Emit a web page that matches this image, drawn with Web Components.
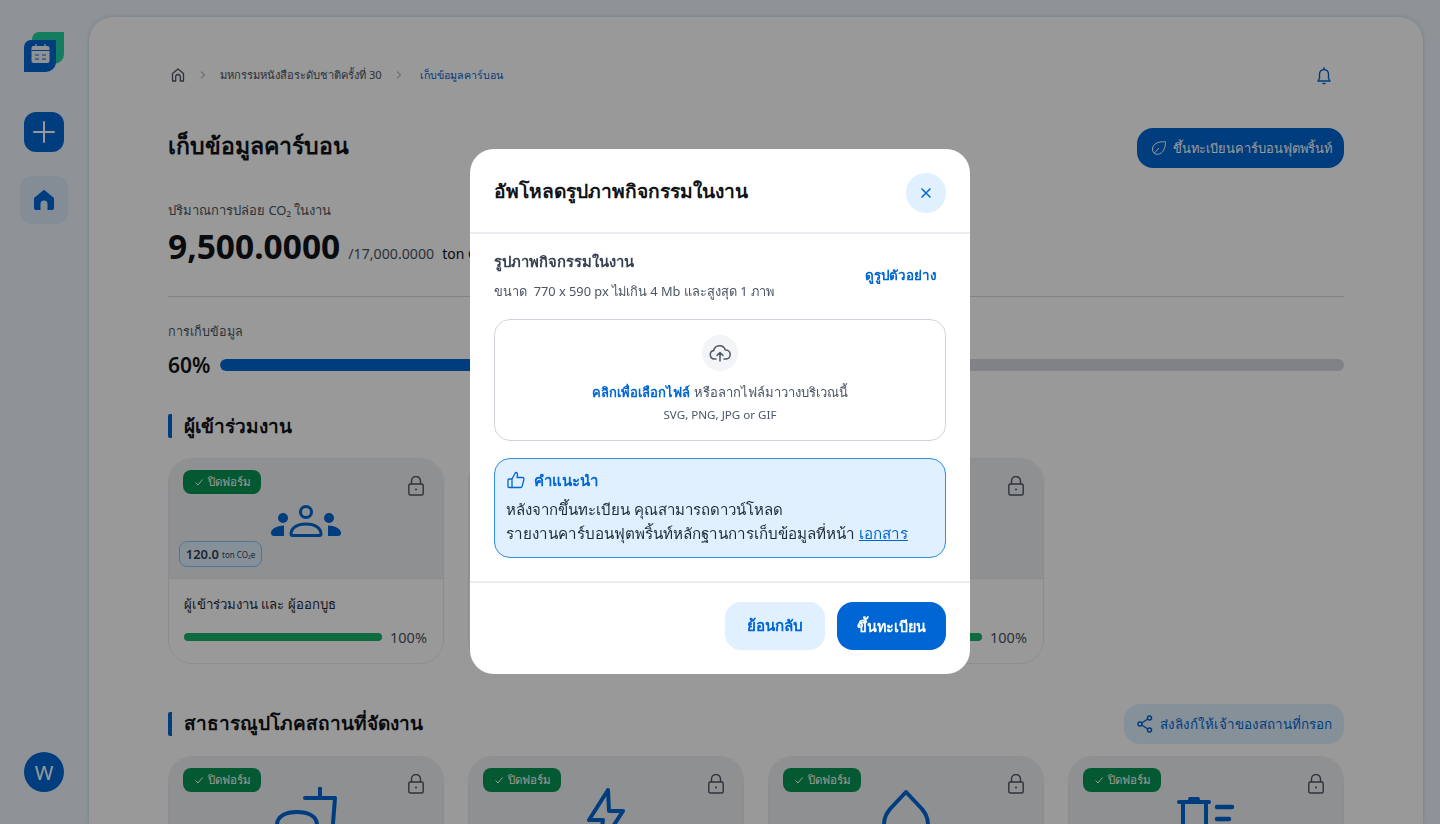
<!DOCTYPE html>
<html lang="th">
<head>
<meta charset="utf-8">
<title>เก็บข้อมูลคาร์บอน</title>
<style>
    html, body { margin: 0; height: 100%; overflow: hidden; }
    body {
        font-family: "Noto Sans", sans-serif;
        background: #eef6fc;
        color: #101318;
    }
</style>
</head>
<body>
<app-shell>
    <app-sidebar slot="side"></app-sidebar>
    <page-main>
        <page-crumbs></page-crumbs>
        <page-heading></page-heading>
        <carbon-stats></carbon-stats>

        <section-title>ผู้เข้าร่วมงาน</section-title>
        <card-grid>
            <carbon-card icon="people" title-text="ผู้เข้าร่วมงาน และ ผู้ออกบูธ" chip="120.0" badge progress></carbon-card>
            <carbon-card progress></carbon-card>
            <carbon-card progress></carbon-card>
        </card-grid>

        <section-title second action>สาธารณูปโภคสถานที่จัดงาน</section-title>
        <card-grid>
            <carbon-card icon="cup" badge></carbon-card>
            <carbon-card icon="bolt" badge></carbon-card>
            <carbon-card icon="drop" badge></carbon-card>
            <carbon-card icon="trash" badge></carbon-card>
        </card-grid>
    </page-main>
</app-shell>

<upload-modal></upload-modal>

<script>
const BLUE = '#0066d3';

class AppShell extends HTMLElement {
    constructor(){
        super();
        this.attachShadow({mode: 'open'});
        this.shadowRoot.innerHTML = `
            <style>
                :host { display: flex; height: 824px; overflow: hidden; }
                #side { width: 89px; flex: none; }
                #main { flex: 1; min-width: 0; padding: 17px 17px 0 0; }
            </style>
            <div id="side"><slot name="side"></slot></div>
            <div id="main"><slot></slot></div>
        `;
    }
}

class AppSidebar extends HTMLElement {
    constructor(){
        super();
        this.attachShadow({mode: 'open'});
        this.shadowRoot.innerHTML = `
            <style>
                :host { display: flex; flex-direction: column; align-items: center; height: 824px; padding-top: 32px; box-sizing: border-box; width: 88px; }
                #logo { width: 40px; height: 40px; display: block; }
                #add {
                    width: 40px; height: 40px; margin-top: 40px; border-radius: 12px; background: ${BLUE};
                    display: flex; align-items: center; justify-content: center;
                }
                #home {
                    width: 48px; height: 48px; margin-top: 24px; border-radius: 12px; background: #dcebfb;
                    display: flex; align-items: center; justify-content: center;
                }
                #user {
                    width: 40px; height: 40px; margin-top: auto; margin-bottom: 32px; border-radius: 50%; background: ${BLUE};
                    color: #fff; font-size: 20px; display: flex; align-items: center; justify-content: center;
                }
            </style>
            <svg id="logo" viewBox="0 0 40 40">
                <path d="M15 0H40V22A10 10 0 0 1 30 32H8V7A7 7 0 0 1 15 0Z" fill="#20d0a0"/>
                <path d="M0 15A7 7 0 0 1 7 8H32V30A10 10 0 0 1 22 40H0Z" fill="${BLUE}"/>
                <rect x="7.500" y="14" width="18" height="17" rx="2" fill="#f2f4f7"/>
                <path d="M7.500 18.500H25.500" stroke="${BLUE}" stroke-width="1"/>
                <path d="M12 12V16M21 12V16" stroke="#f2f4f7" stroke-width="1.200"/>
                <path d="M11 23H15M18 23H22M11 27H15M18 27H22" stroke="${BLUE}" stroke-width="1.200"/>
            </svg>
            <div id="add">
                <svg width="24" height="24" viewBox="0 0 24 24" fill="none" stroke="#fff" stroke-width="2" stroke-linecap="round"><path d="M12 2V22M2 12H22"/></svg>
            </div>
            <div id="home">
                <svg width="24" height="24" viewBox="0 0 24 24" fill="${BLUE}"><path d="M12 1.800 2.600 9.400A1.600 1.600 0 0 0 2 10.600V20a2 2 0 0 0 2 2h4.500v-6a3.500 3.500 0 0 1 7 0v6H20a2 2 0 0 0 2-2v-9.400a1.600 1.600 0 0 0-.6-1.200Z"/></svg>
            </div>
            <div id="user">W</div>
        `;
    }
}

class PageMain extends HTMLElement {
    constructor(){
        super();
        this.attachShadow({mode: 'open'});
        this.shadowRoot.innerHTML = `
            <style>
                :host {
                    display: block; height: 807px; box-sizing: border-box; overflow: hidden;
                    background: #fff; border-radius: 24px 24px 0 0; padding: 48px 79px 0;
                    box-shadow: 0 0 4px rgba(140,170,210,.5);
                }
            </style>
            <slot></slot>
        `;
    }
}

class PageCrumbs extends HTMLElement {
    constructor(){
        super();
        this.attachShadow({mode: 'open'});
        const chevron = '<svg class="chev" width="16" height="16" viewBox="0 0 16 16" fill="none" stroke="#b8bec8" stroke-width="1.200"><path d="M6 4.500 9.500 8 6 11.500"/></svg>';
        this.shadowRoot.innerHTML = `
            <style>
                :host { display: flex; align-items: center; height: 20px; font-size: 11.150px; color: #4b5563; gap: 9px; white-space: nowrap; }
                .active { color: ${BLUE}; margin-left: 4px; font-size: 10.700px; }
                #bell { margin-left: auto; margin-right: 12px; margin-top: 2px; display: block; }
                .home { display: block; margin-left: 2px; }
            </style>
            <svg class="home" width="16" height="16" viewBox="0 0 16 16" fill="none" stroke="#4b5563" stroke-width="1.300"><path d="M2.500 6.500 8 2l5.500 4.500V14h-3.200V9.800a2.300 2.300 0 0 0-4.600 0V14H2.500Z" stroke-linejoin="round"/></svg>
            ${chevron}
            <span>มหกรรมหนังสือระดับชาติครั้งที่ 30</span>
            ${chevron}
            <span class="active">เก็บข้อมูลคาร์บอน</span>
            <svg id="bell" width="16" height="18" viewBox="0 0 16 18" fill="none" stroke="${BLUE}" stroke-width="1.400" stroke-linejoin="round"><path d="M8 2.500a4.500 4.500 0 0 0-4.500 4.500v4.500L2 14h12l-1.500-2.500V7A4.500 4.500 0 0 0 8 2.500Z"/><path d="M8 .8v1.700M7 16.500h2" stroke-linecap="round"/></svg>
        `;
    }
}

class PageHeading extends HTMLElement {
    constructor(){
        super();
        this.attachShadow({mode: 'open'});
        this.shadowRoot.innerHTML = `
            <style>
                :host { display: flex; align-items: center; justify-content: space-between; height: 40px; margin-top: 43px; }
                h1 { margin: 0 0 5px; font-size: 23px; font-weight: 600; color: #101318; }
                #reg {
                    display: flex; align-items: center; gap: 6px; height: 40px; padding: 0 12px 0 14px;
                    background: ${BLUE}; color: #fff; border-radius: 16px; font-size: 12.900px; font-weight: 500;
                }
            </style>
            <h1>เก็บข้อมูลคาร์บอน</h1>
            <div id="reg">
                <svg width="16" height="16" viewBox="0 0 16 16" fill="none" stroke="#fff" stroke-width="1"><path d="M14.500 1.800C9 1.500 2 2.500 1.500 9c-.2 3 2 5.500 5 5.300C12.500 14 14.500 7 14.500 1.800ZM3.500 13 8 8"/></svg>
                <span>ขึ้นทะเบียนคาร์บอนฟุตพริ้นท์</span>
            </div>
        `;
    }
}

class CarbonStats extends HTMLElement {
    constructor(){
        super();
        this.attachShadow({mode: 'open'});
        this.shadowRoot.innerHTML = `
            <style>
                :host { display: block; margin-top: 32px; }
                #label { font-size: 13px; line-height: 20px; color: #4b5563; }
                #value { display: flex; align-items: baseline; margin-top: 6px; height: 40px; line-height: 40px; white-space: nowrap; }
                b { font-size: 33.500px; font-weight: 700; color: #101318; }
                .of { font-size: 14.200px; color: #4b5563; margin-left: 8px; }
                .unit { font-size: 14px; color: #101318; margin-left: 8px; }
                hr { border: 0; height: 1px; background: #d5d9e0; margin: 30px 0 0; }
                #progress-label { font-size: 12.600px; line-height: 20px; color: #4b5563; margin-top: 25px; }
                #row { display: flex; align-items: center; gap: 9px; margin-top: 11px; height: 24px; }
                #pct { font-size: 21px; font-weight: 600; color: #101318; width: 43px; white-space: nowrap; }
                #track { flex: 1; height: 12px; border-radius: 6px; background: #d5d9e0; overflow: hidden; }
                #fill { width: 60%; height: 100%; background: ${BLUE}; border-radius: 6px; }
            </style>
            <div id="label">ปริมาณการปล่อย CO₂ ในงาน</div>
            <div id="value"><b>9,500.0000</b><span class="of">/17,000.0000</span><span class="unit">ton CO₂e</span></div>
            <hr>
            <div id="progress-label">การเก็บข้อมูล</div>
            <div id="row"><span id="pct">60%</span><div id="track"><div id="fill"></div></div></div>
        `;
    }
}

class SectionTitle extends HTMLElement {
    constructor(){
        super();
        this.attachShadow({mode: 'open'});
        this.shadowRoot.innerHTML = `
            <style>
                :host { display: flex; align-items: center; height: 40px; margin-top: 29px; }
                :host([second]) { margin-top: 40px; }
                #bar { width: 4px; height: 24px; background: ${BLUE}; border-radius: 2px 0 0 2px; margin-right: 12px; }
                h2 { margin: 0; font-size: 19px; font-weight: 600; color: #101318; flex: 1; }
                :host([second]) h2 { margin-bottom: 2px; }
                #share {
                    display: none; align-items: center; gap: 7px; height: 40px; padding: 0 12px 0 13px;
                    background: #e0f0ff; color: ${BLUE}; border-radius: 16px; font-size: 13.400px; font-weight: 500;
                }
                :host([action]) #share { display: flex; }
            </style>
            <div id="bar"></div>
            <h2><slot></slot></h2>
            <div id="share">
                <svg width="16" height="18" viewBox="0 0 16 18" fill="none" stroke="${BLUE}" stroke-width="1.500"><circle cx="12.500" cy="3" r="2"/><circle cx="3" cy="9" r="2"/><circle cx="12.500" cy="15" r="2"/><path d="M4.800 8 10.800 4M4.800 10l6 4"/></svg>
                <span>ส่งลิงก์ให้เจ้าของสถานที่กรอก</span>
            </div>
        `;
    }
}

class CardGrid extends HTMLElement {
    constructor(){
        super();
        this.attachShadow({mode: 'open'});
        this.shadowRoot.innerHTML = `
            <style>
                :host { display: grid; grid-template-columns: repeat(4, 276px); gap: 24px; margin-top: 12px; }
            </style>
            <slot></slot>
        `;
    }
}

const CARD_ICONS = {
    people: `<svg width="70" height="32" viewBox="0 0 70 32" fill="${BLUE}">
        <circle cx="12" cy="13" r="5"/><circle cx="58" cy="13" r="5"/>
        <path d="M13 20.500V31H3a3 3 0 0 1-3-3c0-4 5-7 13-7.500ZM57 20.500V31h10a3 3 0 0 0 3-3c0-4-5-7-13-7.500Z"/>
        <circle cx="35" cy="7" r="5.500" fill="none" stroke="${BLUE}" stroke-width="3"/>
        <path d="M20 29c0-6 6-10 15-10s15 4 15 10c0 1-.7 1.500-1.500 1.500h-27C20.700 30.500 20 30 20 29Z" fill="none" stroke="${BLUE}" stroke-width="3"/>
    </svg>`,
    cup: `<svg width="64" height="64" viewBox="0 0 64 64" fill="none" stroke="${BLUE}" stroke-width="4" stroke-linecap="round" stroke-linejoin="round">
        <path d="M46 1V11M31 11H61L57 62"/><path d="M3 38C3 29 12 25 23 25S43 29 43 38"/>
    </svg>`,
    bolt: `<svg width="40" height="64" viewBox="0 0 40 64" fill="none" stroke="${BLUE}" stroke-width="4" stroke-linejoin="round">
        <path d="M22 3 3 33H17L13 61 37 24H23Z"/>
    </svg>`,
    drop: `<svg width="48" height="64" viewBox="0 0 48 64" fill="none" stroke="${BLUE}" stroke-width="4" stroke-linejoin="round">
        <path d="M24 5 40 22C43 26 46 30 46 38A22 22 0 0 1 2 38C2 30 5 26 8 22Z"/>
    </svg>`,
    trash: `<svg width="58" height="64" viewBox="0 0 58 64" fill="none" stroke="${BLUE}" stroke-width="4" stroke-linecap="round">
        <path d="M2 15H32M13 12H21M6 15V62H29V15"/><path d="M40 20H55M40 32H52" stroke-width="4.500"/>
    </svg>`,
};

class CarbonCard extends HTMLElement {
    constructor(){
        super();
        this.attachShadow({mode: 'open'});
    }

    connectedCallback(){
        const icon = CARD_ICONS[this.getAttribute('icon')] || '';
        const title = this.getAttribute('title-text') || '';
        const chip = this.getAttribute('chip');
        const badge = this.hasAttribute('badge');
        const progress = this.hasAttribute('progress');
        this.shadowRoot.innerHTML = `
            <style>
                :host {
                    display: block; height: 206px; box-sizing: border-box; position: relative; overflow: hidden;
                    border: 1px solid #eaecf0; border-radius: 24px; background: #fff;
                }
                #head { height: 120px; background: #eff1f3; display: flex; align-items: center; justify-content: center; border-bottom: 1px solid #e6e8ec; padding-top: 4px; box-sizing: border-box; }
                #head svg { display: block; flex: none; }
                #badge {
                    position: absolute; left: 14px; top: 11px; height: 24px; width: 78px; box-sizing: border-box;
                    display: flex; align-items: center; justify-content: center; gap: 4px;
                    background: #079455; color: #fff; font-size: 11.500px; border-radius: 8px;
                }
                #lock { position: absolute; right: 19px; top: 17px; }
                #chip {
                    position: absolute; left: 10px; top: 82px; height: 26px; width: 83px; box-sizing: border-box;
                    display: flex; align-items: center; justify-content: center; gap: 3px; white-space: nowrap;
                    background: #e0f0ff; border: 1px solid #90c2f4; border-radius: 8px;
                    color: #374151; font-size: 13px; font-weight: 600;
                }
                #chip small { font-size: 8px; font-weight: 400; }
                #body { padding: 15px 15px 0; }
                #title { height: 20px; font-size: 13.200px; line-height: 20px; color: #1f2937; white-space: nowrap; }
                #bar { display: flex; align-items: center; gap: 8px; margin-top: 13px; height: 20px; }
                #track { flex: 1; height: 8px; border-radius: 4px; background: #17b26a; }
                #pct { font-size: 14.500px; color: #4b5563; width: 38px; white-space: nowrap; }
            </style>
            <div id="head">${icon}</div>
            ${badge ? `<div id="badge"><svg width="10" height="10" viewBox="0 0 10 10" fill="none" stroke="#fff" stroke-width="1"><path d="M1.500 5.500 4 8l4.500-5.500"/></svg><span>ปิดฟอร์ม</span></div>` : ''}
            <svg id="lock" width="16" height="20" viewBox="0 0 16 20" fill="none" stroke="#4b5563" stroke-width="1.400"><rect x=".8" y="8" width="14.400" height="11" rx="1.500"/><path d="M3.500 8V5a4.500 4.500 0 0 1 9 0v3"/><circle cx="8" cy="13.500" r="1" fill="#4b5563" stroke="none"/></svg>
            ${chip ? `<div id="chip"><span>${chip}</span><small>ton CO₂e</small></div>` : ''}
            ${progress ? `<div id="body">
                <div id="title">${title}</div>
                <div id="bar"><div id="track"></div><span id="pct">100%</span></div>
            </div>` : ''}
        `;
    }
}

class UploadDrop extends HTMLElement {
    constructor(){
        super();
        this.attachShadow({mode: 'open'});
        this.shadowRoot.innerHTML = `
            <style>
                :host {
                    display: flex; flex-direction: column; align-items: center; height: 122px; box-sizing: border-box;
                    border: 1px solid #d0d5dd; border-radius: 16px; padding-top: 15px; margin-top: 16px;
                }
                #icon { width: 36px; height: 36px; border-radius: 50%; background: #f2f4f7; display: flex; align-items: center; justify-content: center; }
                #main { font-size: 13px; line-height: 20px; margin-top: 11px; color: #4b5563; white-space: nowrap; }
                #main b { color: ${BLUE}; font-weight: 600; }
                #types { font-size: 11.600px; line-height: 18px; margin-top: 4px; color: #4b5563; }
            </style>
            <div id="icon">
                <svg width="22" height="20" viewBox="0 0 22 20" fill="none" stroke="#4b5563" stroke-width="1.500" stroke-linecap="round" stroke-linejoin="round"><path d="M7 16H5.500a4.300 4.300 0 0 1-.8-8.500 6 6 0 0 1 11.600-.5 4.500 4.500 0 0 1 .7 9H15"/><path d="M11 18V10M8 12.500 11 9.500l3 3"/></svg>
            </div>
            <div id="main"><b>คลิกเพื่อเลือกไฟล์</b> หรือลากไฟล์มาวางบริเวณนี้</div>
            <div id="types">SVG, PNG, JPG or GIF</div>
        `;
    }
}

class TipBox extends HTMLElement {
    constructor(){
        super();
        this.attachShadow({mode: 'open'});
        this.shadowRoot.innerHTML = `
            <style>
                :host {
                    display: block; height: 100px; box-sizing: border-box; margin-top: 17px; padding: 9px 11px 0;
                    border: 1px solid #2e90e8; border-radius: 16px; background: #e0f0ff;
                    font-size: 15px; line-height: 24px; color: #1f2937; white-space: nowrap;
                }
                #head { display: flex; align-items: center; gap: 9px; height: 24px; padding-left: 1px; color: ${BLUE}; font-weight: 600; font-size: 15px; }
                svg { display: block; }
                a { color: ${BLUE}; text-decoration: underline; }
                #text { margin-top: 5px; }
                #second { font-size: 15.200px; }
            </style>
            <div id="head">
                <svg width="18" height="18" viewBox="0 0 18 18" fill="none" stroke="${BLUE}" stroke-width="1.300" stroke-linejoin="round"><path d="M5 8v8.500H2a1 1 0 0 1-1-1V9a1 1 0 0 1 1-1ZM5 8l3.500-6.500c1.500 0 2.300 1.100 2 2.500L10 6.500h5.500a1.500 1.500 0 0 1 1.400 2l-1.800 6.800a1.600 1.600 0 0 1-1.500 1.200H5"/></svg>
                <span>คำแนะนำ</span>
            </div>
            <div id="text">หลังจากขึ้นทะเบียน คุณสามารถดาวน์โหลด<br><span id="second">รายงานคาร์บอนฟุตพริ้นท์หลักฐานการเก็บข้อมูลที่หน้า <a>เอกสาร</a></span></div>
        `;
    }
}

class UploadModal extends HTMLElement {
    constructor(){
        super();
        this.attachShadow({mode: 'open'});
        this.shadowRoot.innerHTML = `
            <style>
                :host {
                    position: fixed; inset: 0; z-index: 10; display: flex; align-items: center; justify-content: center;
                    background: rgba(0,0,0,0.4); padding-bottom: 1px;
                }
                #modal { width: 500px; height: 525px; box-sizing: border-box; background: #fff; border-radius: 24px; display: flex; flex-direction: column; }
                header { height: 85px; flex: none; box-sizing: border-box; padding: 5px 24px 0; display: flex; align-items: center; justify-content: space-between; border-bottom: 2px solid #eaecf0; }
                header h1 { margin: 0 0 5px; font-size: 19.200px; font-weight: 600; color: #101318; }
                #close { width: 40px; height: 40px; border-radius: 50%; background: #e0f0ff; display: flex; align-items: center; justify-content: center; }
                #main { flex: 1; padding: 13px 24px 0; }
                #top { display: flex; align-items: center; justify-content: space-between; }
                h2 { margin: 0; font-size: 14.800px; line-height: 28px; font-weight: 600; color: #374151; }
                p { margin: 4px 0 0; font-size: 12.800px; line-height: 24px; color: #4b5563; }
                #sample { font-size: 13.400px; font-weight: 600; color: ${BLUE}; padding: 0 9px 0 0; }
                footer { height: 93px; flex: none; box-sizing: border-box; border-top: 2px solid #eaecf0; padding: 19px 24px 0; display: flex; justify-content: flex-end; gap: 12px; }
                .btn { height: 48px; border-radius: 16px; display: flex; align-items: center; justify-content: center; font-weight: 600; }
                #back { width: 100px; background: #e0f0ff; color: ${BLUE}; font-size: 15.200px; }
                #save { width: 109px; background: ${BLUE}; color: #fff; font-size: 14.400px; }
            </style>
            <div id="modal">
                <header>
                    <h1>อัพโหลดรูปภาพกิจกรรมในงาน</h1>
                    <div id="close"><svg width="12" height="12" viewBox="0 0 12 12" fill="none" stroke="${BLUE}" stroke-width="1.500" stroke-linecap="round"><path d="M2 2 10 10M10 2 2 10"/></svg></div>
                </header>
                <div id="main">
                    <div id="top">
                        <div>
                            <h2>รูปภาพกิจกรรมในงาน</h2>
                            <p>ขนาด &nbsp;770 x 590 px ไม่เกิน 4 Mb และสูงสุด 1 ภาพ</p>
                        </div>
                        <span id="sample">ดูรูปตัวอย่าง</span>
                    </div>
                    <upload-drop></upload-drop>
                    <tip-box></tip-box>
                </div>
                <footer>
                    <div class="btn" id="back">ย้อนกลับ</div>
                    <div class="btn" id="save">ขึ้นทะเบียน</div>
                </footer>
            </div>
        `;
    }
}

customElements.define('app-shell', AppShell);
customElements.define('app-sidebar', AppSidebar);
customElements.define('page-main', PageMain);
customElements.define('page-crumbs', PageCrumbs);
customElements.define('page-heading', PageHeading);
customElements.define('carbon-stats', CarbonStats);
customElements.define('section-title', SectionTitle);
customElements.define('card-grid', CardGrid);
customElements.define('carbon-card', CarbonCard);
customElements.define('upload-drop', UploadDrop);
customElements.define('tip-box', TipBox);
customElements.define('upload-modal', UploadModal);
</script>
</body>
</html>
